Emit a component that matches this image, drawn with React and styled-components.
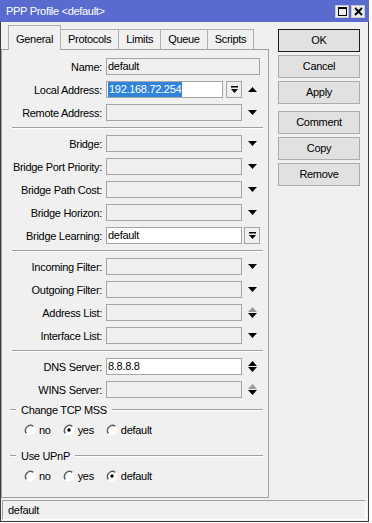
import styled, { createGlobalStyle } from "styled-components";

const GlobalStyle = createGlobalStyle`
  html, body {
    margin: 0;
    padding: 0;
    background: #fff;
  }
  body {
    font-family: "Liberation Sans", Arial, sans-serif;
    font-size: 11px;
    letter-spacing: -0.3px;
    color: #000;
  }
`;

const Down = ({ color = "#000" }) => (
  <svg width="9" height="5" viewBox="0 0 9 5">
    <polygon points="0,0 9,0 4.5,5" fill={color} />
  </svg>
);

const Up = ({ color = "#000" }) => (
  <svg width="9" height="5" viewBox="0 0 9 5">
    <polygon points="0,5 9,5 4.5,0" fill={color} />
  </svg>
);

const ComboIcon = () => (
  <svg width="9" height="9" viewBox="0 0 9 9">
    <rect x="1" y="1" width="7" height="1.5" fill="#000" />
    <polygon points="1,4 8,4 4.5,8" fill="#000" />
  </svg>
);

const RadioIcon = ({ checked }) => (
  <svg width="12" height="12" viewBox="0 0 12 12">
    <circle cx="6" cy="6" r="5" fill="#fff" />
    <path d="M2.5 9.5 A5 5 0 0 1 9.5 2.5" stroke="#5a5a5a" strokeWidth="1.4" fill="none" />
    <path d="M9.5 2.5 A5 5 0 0 1 2.5 9.5" stroke="#fff" strokeWidth="1.2" fill="none" />
    {checked && <circle cx="6" cy="6" r="1.7" fill="#000" />}
  </svg>
);

const Radio = ({ label, checked }) => (
  <RadioItem>
    <RadioIcon checked={checked} />
    <span>{label}</span>
  </RadioItem>
);

const Arrows = ({ up, down, upColor }) => (
  <ArrowSlot>
    {up && <Up color={upColor} />}
    {down && <Down />}
  </ArrowSlot>
);

const Row = ({ label, children }) => (
  <RowBox>
    <Label>{label}</Label>
    {children}
  </RowBox>
);

const Group = ({ title, value, spaced }) => (
  <GroupBox $spaced={spaced}>
    <GroupHeader>
      <Etch style={{ width: 6 }} />
      <span>{title}</span>
      <Etch style={{ flex: 1 }} />
    </GroupHeader>
    <RadioRow>
      {["no", "yes", "default"].map(v => (
        <Radio key={v} label={v} checked={v === value} />
      ))}
    </RadioRow>
  </GroupBox>
);

const tabs = ["General", "Protocols", "Limits", "Queue", "Scripts"];

const App = () => {
  return (
    <>
      <GlobalStyle />
      <Window>
        <TitleBar>
          <span>PPP Profile &lt;default&gt;</span>
          <TitleButtons>
            <TitleBtn>
              <svg width="9" height="9" viewBox="0 0 9 9">
                <rect x="0.5" y="0.5" width="8" height="8" fill="none" stroke="#000" />
                <rect x="0" y="0" width="9" height="2" fill="#000" />
              </svg>
            </TitleBtn>
            <TitleBtn>
              <svg width="9" height="9" viewBox="0 0 9 9">
                <path d="M1 1 L8 8 M8 1 L1 8" stroke="#000" strokeWidth="2" />
              </svg>
            </TitleBtn>
          </TitleButtons>
        </TitleBar>

        <Main>
          <LeftCol>
            <TabRow>
              {tabs.map((t, i) => (
                <Tab key={t} $active={i === 0}>{t}</Tab>
              ))}
            </TabRow>
            <Panel>
              <Row label="Name:">
                <Field $w={154}>default</Field>
              </Row>
              <Row label="Local Address:">
                <Field $w={117} $white>
                  <Selected>192.168.72.254</Selected>
                </Field>
                <ComboBtn $gap={3}><ComboIcon /></ComboBtn>
                <Arrows up />
              </Row>
              <Row label="Remote Address:">
                <Field $w={136} />
                <Arrows down />
              </Row>
              <Sep />
              <Row label="Bridge:">
                <Field $w={136} />
                <Arrows down />
              </Row>
              <Row label="Bridge Port Priority:">
                <Field $w={136} />
                <Arrows down />
              </Row>
              <Row label="Bridge Path Cost:">
                <Field $w={136} />
                <Arrows down />
              </Row>
              <Row label="Bridge Horizon:">
                <Field $w={136} />
                <Arrows down />
              </Row>
              <Row label="Bridge Learning:">
                <Field $w={136} $white>default</Field>
                <ComboBtn $gap={2}><ComboIcon /></ComboBtn>
              </Row>
              <Sep />
              <Row label="Incoming Filter:">
                <Field $w={136} />
                <Arrows down />
              </Row>
              <Row label="Outgoing Filter:">
                <Field $w={136} />
                <Arrows down />
              </Row>
              <Row label="Address List:">
                <Field $w={136} />
                <Arrows up down upColor="#9a9a9a" />
              </Row>
              <Row label="Interface List:">
                <Field $w={136} />
                <Arrows down />
              </Row>
              <Sep />
              <Row label="DNS Server:">
                <Field $w={136} $white>8.8.8.8</Field>
                <Arrows up down />
              </Row>
              <Row label="WINS Server:">
                <Field $w={136} />
                <Arrows up down upColor="#9a9a9a" />
              </Row>
              <Group title="Change TCP MSS" value="yes" />
              <Group title="Use UPnP" value="default" spaced />
            </Panel>
          </LeftCol>

          <RightCol>
            <Button $default>OK</Button>
            <Button>Cancel</Button>
            <Button>Apply</Button>
            <Button $spaced>Comment</Button>
            <Button>Copy</Button>
            <Button>Remove</Button>
          </RightCol>
        </Main>

        <StatusBar>default</StatusBar>
      </Window>
    </>
  );
};

export default App;

const Window = styled.div`
  width: 369px;
  height: 522px;
  box-sizing: border-box;
  border: 1px solid #3c3c3c;
  border-top: none;
  background: #f0f0f0;
  display: flex;
  flex-direction: column;
`;

const TitleBar = styled.div`
  height: 22px;
  flex: none;
  background: #5a6bd0;
  color: #fff;
  display: flex;
  align-items: center;
  padding: 0 4px 0 6px;
  margin: 0 -1px;
`;

const TitleButtons = styled.div`
  margin-left: auto;
  display: flex;
  gap: 2px;
`;

const TitleBtn = styled.div`
  width: 14px;
  height: 13px;
  box-sizing: border-box;
  background: #ececec;
  border: 1px solid #c8c8c8;
  display: flex;
  align-items: center;
  justify-content: center;
`;

const Main = styled.div`
  display: flex;
  padding-top: 3px;
  flex: none;
`;

const LeftCol = styled.div`
  width: 268px;
  display: flex;
  flex-direction: column;
`;

const TabRow = styled.div`
  display: flex;
  align-items: flex-end;
  height: 24px;
  padding-left: 8px;
  position: relative;
  z-index: 1;
`;

const Tab = styled.div`
  box-sizing: border-box;
  height: ${p => (p.$active ? "25px" : "20px")};
  line-height: 18px;
  padding: ${p => (p.$active ? "4px 7px 0" : "0 7px")};
  margin-left: -1px;
  margin-bottom: ${p => (p.$active ? "-1px" : "0")};
  border: 1px solid #b0b0b0;
  border-bottom: none;
  background: #f0f0f0;
`;

const Panel = styled.div`
  height: 449px;
  box-sizing: border-box;
  border: 1px solid #a0a0a0;
  padding-top: 8px;
  display: flex;
  flex-direction: column;
  gap: 6px;
`;

const RowBox = styled.div`
  display: flex;
  align-items: center;
  height: 17px;
`;

const Label = styled.div`
  width: 100px;
  flex: none;
  text-align: right;
  margin-right: 4px;
  white-space: nowrap;
`;

const Field = styled.div`
  width: ${p => p.$w}px;
  height: 17px;
  box-sizing: border-box;
  flex: none;
  border: 1px solid #a5a5a5;
  background: ${p => (p.$white ? "#fff" : "#f0f0f0")};
  padding-left: 1px;
  line-height: 15px;
  overflow: hidden;
  white-space: nowrap;
`;

const Selected = styled.span`
  display: inline-block;
  background: #3084dc;
  color: #fff;
  padding: 0 1px;
`;

const ComboBtn = styled.div`
  width: 16px;
  height: 17px;
  box-sizing: border-box;
  margin-left: ${p => p.$gap}px;
  border: 1px solid #a5a5a5;
  background: #f0f0f0;
  display: flex;
  align-items: center;
  justify-content: center;
`;

const ArrowSlot = styled.div`
  width: 20px;
  display: flex;
  flex-direction: column;
  align-items: center;
  justify-content: center;
  gap: 1px;
`;

const Sep = styled.div`
  height: 0;
  border-top: 1px solid #a0a0a0;
  border-bottom: 1px solid #fff;
  margin: 0 5px 0 10px;
`;

const GroupBox = styled.div`
  margin-top: ${p => (p.$spaced ? "7px" : "0")};
`;

const GroupHeader = styled.div`
  display: flex;
  align-items: center;
  gap: 5px;
  height: 12px;
  margin: 0 5px 0 8px;
`;

const Etch = styled.div`
  height: 0;
  border-top: 1px solid #a0a0a0;
  border-bottom: 1px solid #fff;
`;

const RadioRow = styled.div`
  display: flex;
  align-items: center;
  gap: 12px;
  height: 14px;
  margin-top: 7px;
  padding-left: 22px;
`;

const RadioItem = styled.div`
  display: flex;
  align-items: center;
  gap: 3px;
`;

const RightCol = styled.div`
  width: 82px;
  margin-left: 9px;
  padding-top: 4px;
  display: flex;
  flex-direction: column;
  gap: 3px;
`;

const Button = styled.div`
  height: 23px;
  box-sizing: border-box;
  border: 1px solid ${p => (p.$default ? "#1e1e1e" : "#adadad")};
  background: #e1e1e1;
  text-align: center;
  line-height: 21px;
  margin-top: ${p => (p.$spaced ? "4px" : "0")};
`;

const StatusBar = styled.div`
  margin: 2px 0 0 1px;
  width: 364px;
  height: 20px;
  box-sizing: border-box;
  border-top: 1px solid #a0a0a0;
  border-left: 1px solid #a0a0a0;
  border-right: 1px solid #fff;
  border-bottom: 1px solid #fff;
  padding-left: 5px;
  line-height: 18px;
`;
